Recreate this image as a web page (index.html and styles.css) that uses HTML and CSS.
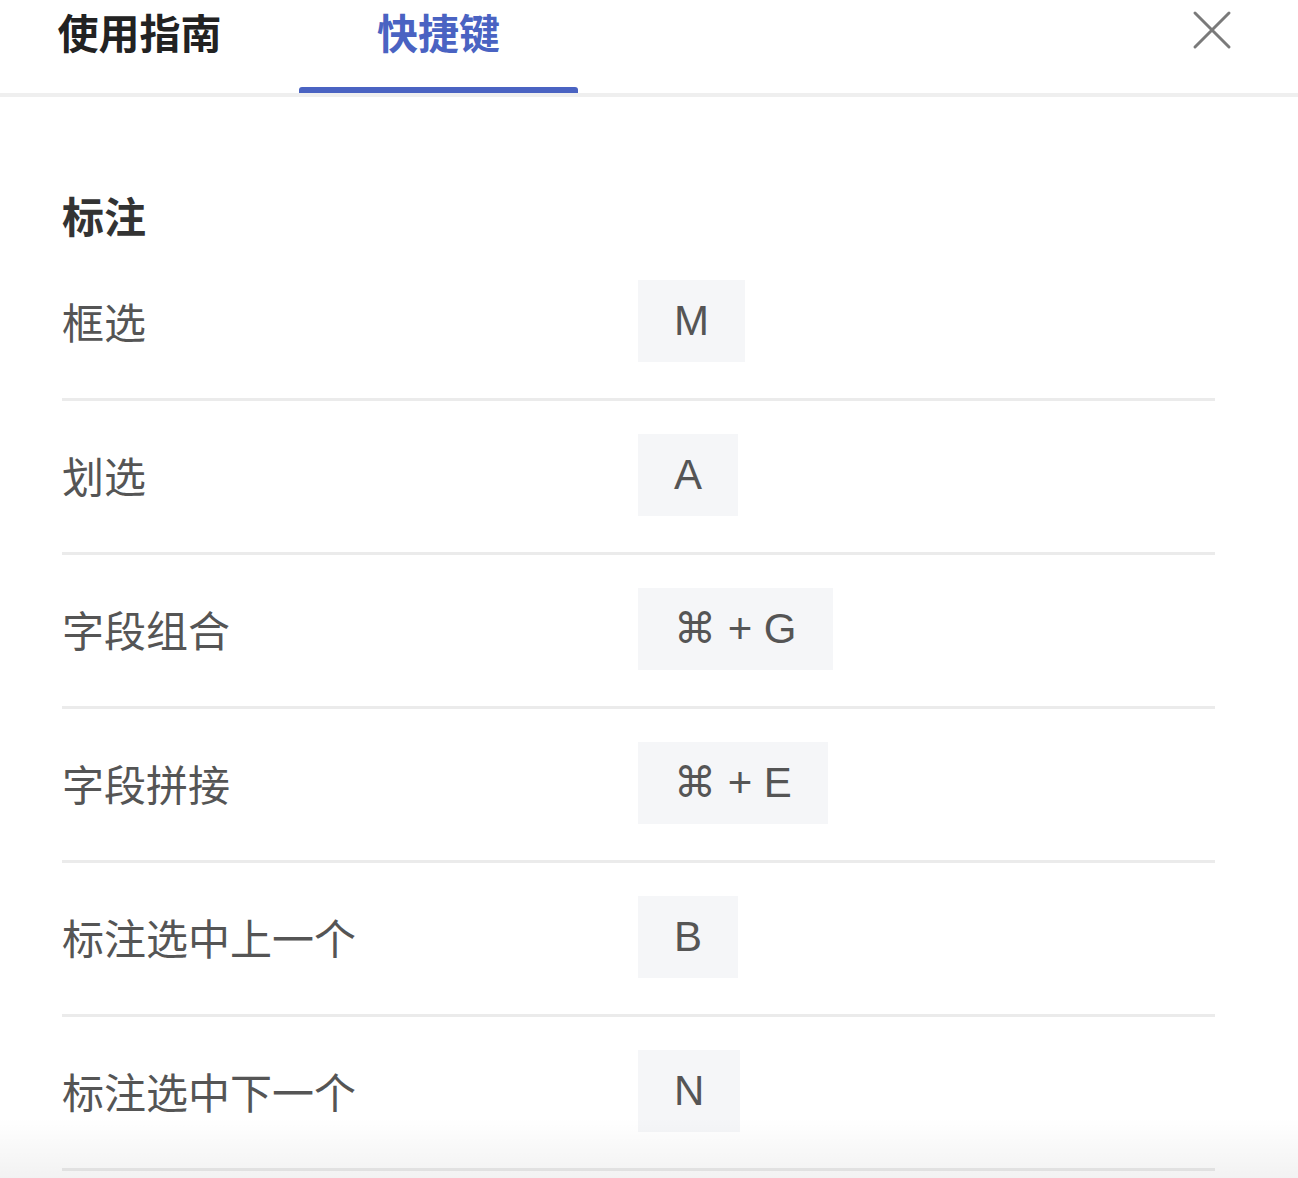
FILE: index.html
```html
<!DOCTYPE html>
<html lang="zh">
<head>
<meta charset="utf-8">
<link rel="stylesheet" href="styles.css">
</head>
<body>
<div class="panel">
  <div class="tabbar">
    <div class="tab">使用指南</div>
    <div class="tab active">快捷键</div>
    <button class="close" aria-label="关闭">
      <svg width="40" height="40" viewBox="0 0 40 40"><path d="M3 3 L37 37 M37 3 L3 37" stroke="#7a7a7a" stroke-width="3" stroke-linecap="round" fill="none"/></svg>
    </button>
  </div>
  <div class="content">
    <div class="section-title">标注</div>
    <div class="row"><div class="label">框选</div><div class="key">M</div></div>
    <div class="row"><div class="label">划选</div><div class="key">A</div></div>
    <div class="row"><div class="label">字段组合</div><div class="key"><span class="cmd">⌘</span> + G</div></div>
    <div class="row"><div class="label">字段拼接</div><div class="key"><span class="cmd">⌘</span> + E</div></div>
    <div class="row"><div class="label">标注选中上一个</div><div class="key">B</div></div>
    <div class="row"><div class="label">标注选中下一个</div><div class="key">N</div></div>
  </div>
  <div class="fade"></div>
</div>
</body>
</html>
```

FILE: styles.css
```css
html, body {
  margin: 0;
  padding: 0;
  background: #fff;
  overflow: hidden;
}
body {
  font-family: "Noto Sans CJK SC", "Liberation Sans", sans-serif;
}
.panel {
  width: 1298px;
  height: 1178px;
  position: relative;
  overflow: hidden;
}
.tabbar {
  display: flex;
  align-items: flex-start;
  gap: 20px;
  height: 93px;
  border-bottom: 4px solid #efefef;
}
.tab {
  position: relative;
  width: 279px;
  height: 93px;
  text-align: center;
  font-size: 41px;
  font-weight: 700;
  line-height: 62px;
  color: #222;
}
.tab.active {
  color: #4a63c2;
}
.tab.active::after {
  content: "";
  position: absolute;
  left: 0;
  right: 0;
  bottom: 0;
  height: 6px;
  border-radius: 3px 3px 0 0;
  background: #4a63c2;
}
.close {
  margin-left: auto;
  margin-right: 66px;
  margin-top: 10px;
  width: 40px;
  height: 40px;
  padding: 0;
  border: 0;
  background: none;
  display: flex;
}
.content {
  padding: 0 83px 0 62px;
}
.section-title {
  margin-top: 94px;
  height: 48px;
  line-height: 48px;
  font-size: 42px;
  font-weight: 700;
  color: #333;
  margin-bottom: 8px;
}
.row {
  display: flex;
  align-items: center;
  padding: 33px 0 36px;
  border-bottom: 3px solid #ebebeb;
}
.label {
  width: 576px;
  font-size: 42px;
  line-height: 48px;
  color: #555;
}
.key {
  height: 82px;
  line-height: 82px;
  padding: 0 36px;
  background: #f5f6f8;
  font-family: "Liberation Sans", "DejaVu Sans", sans-serif;
  font-size: 42px;
  color: #555;
  white-space: pre;
}
.cmd {
  font-family: "DejaVu Sans", sans-serif;
  font-size: 42px;
}
.fade {
  position: absolute;
  left: 0;
  right: 0;
  bottom: 0;
  height: 60px;
  background: linear-gradient(to bottom, rgba(0,0,0,0), rgba(0,0,0,0.05));
  pointer-events: none;
}
```
